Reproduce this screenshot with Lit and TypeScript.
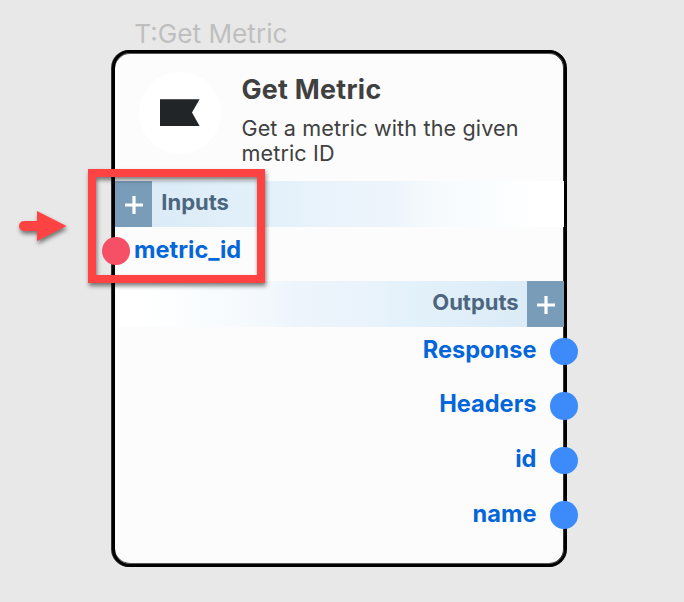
import { LitElement, html, css } from "lit";
import { customElement, property } from "lit/decorators.js";

@customElement("section-bar")
class SectionBar extends LitElement {
  @property() label = "";
  @property({ reflect: true }) side = "in";

  static styles = css`
    :host { display: flex; height: 45.5px; }
    :host([side="in"]) {
      background: linear-gradient(90deg, #dbebf7 8%, #e3f1fa 36%, #eaf3fb 47%, #edf4fc 62%, #f3f8fc 67%, #f8fcfe 79%, #fff 94%);
    }
    :host([side="out"]) {
      flex-direction: row-reverse;
      margin-right: -0.4px;
      background: linear-gradient(270deg, #dbebf7 8%, #e3f1fa 34%, #eaf3fb 45%, #edf4fc 60%, #f3f8fc 66%, #f8fcfe 79%, #fff 94%);
    }
    .add { width: 36.7px; display: grid; place-items: center; background: #799cb8; }
    :host([side="out"]) .add { width: 37.2px; }
    .add svg { margin: 3px 0 0 0.7px; }
    .label {
      padding: 0 9.6px;
      font: 700 22px/42.5px Inter, sans-serif;
      color: #4d6680;
    }
    :host([side="out"]) .label { padding: 0 8.5px; }
  `;

  render() {
    return html`
      <div class="add">
        <svg width="18" height="18" viewBox="0 0 18 18"><path d="M9 0v18M0 9h18" stroke="#fff" stroke-width="3.2"/></svg>
      </div>
      <div class="label">${this.label}</div>
    `;
  }
}

@customElement("app-root")
class AppRoot extends LitElement {
  static styles = css`
    :host {
      display: block;
      position: relative;
      box-sizing: border-box;
      width: 684px;
      height: 602px;
      padding: 18px 0 0 112px;
      overflow: hidden;
      background: #e8e8e8;
      font-family: Inter, sans-serif;
    }
    .tag { height: 32px; padding-left: 22.3px; font-size: 26.2px; line-height: 32px; color: #bfbfbf; }
    .card {
      box-sizing: border-box;
      width: 455px;
      height: 517px;
      border: 3px solid #000;
      border-radius: 18px;
      background: #fcfcfc;
      box-shadow: -1px 0 0 #333, inset -1px 0 0 #333, inset 0 1px 0 #555, inset 0 -1px 0 #555;
    }
    .head { display: flex; height: 128px; box-sizing: border-box; padding: 18.5px 0 0 24px; }
    .avatar { width: 82px; height: 82px; border-radius: 50%; background: #fff; display: grid; place-items: center; }
    .words { margin-left: 20.4px; padding-top: 0.5px; }
    .title { font-size: 26.8px; font-weight: 700; line-height: 34px; color: #404040; letter-spacing: 0.3px; }
    .desc { margin-top: 10px; width: 300px; font-size: 21.6px; line-height: 25px; color: #404040; letter-spacing: 0.14px; }
    .port { position: relative; display: flex; align-items: center; height: 54.6px; font-size: 23.6px; font-weight: 700; color: #0566d9; }
    .port.in { padding-left: 19px; }
    .port.out { justify-content: flex-end; padding-right: 27.5px; }
    .name { margin-top: -9px; }
    .dot { position: absolute; width: 27.6px; height: 27.6px; border-radius: 50%; }
    .in .dot { left: -13px; top: 10.5px; background: #f55066; }
    .out .dot { right: -14px; top: 11px; background: #3d8bfa; }
    .marks { position: absolute; inset: 0; filter: drop-shadow(1px 3px 2px rgba(0, 0, 0, 0.5)); }
  `;

  render() {
    return html`
      <div class="tag">T:Get Metric</div>
      <div class="card">
        <div class="head">
          <div class="avatar">
            <svg width="40" height="28" viewBox="0 0 40 28"><path d="M0 .2H39.6L32 13.6 39.6 27H0Z" fill="#222527"/></svg>
          </div>
          <div class="words">
            <div class="title">Get Metric</div>
            <div class="desc">Get a metric with the given metric ID</div>
          </div>
        </div>
        <section-bar side="in" label="Inputs"></section-bar>
        <div class="port in"><span class="dot"></span><span class="name">metric_id</span></div>
        <section-bar side="out" label="Outputs"></section-bar>
        ${["Response", "Headers", "id", "name"].map(
          (n) => html`<div class="port out"><span class="name">${n}</span><span class="dot"></span></div>`
        )}
      </div>
      <svg class="marks" width="684" height="602" viewBox="0 0 684 602">
        <rect x="92" y="173" width="169" height="106" fill="none" stroke="#ff4343" stroke-width="8"/>
        <path d="M24 221H37V211L66.5 226 37 241V231H24A5 5 0 0 1 24 221Z" fill="#ff4343"/>
      </svg>
    `;
  }
}
